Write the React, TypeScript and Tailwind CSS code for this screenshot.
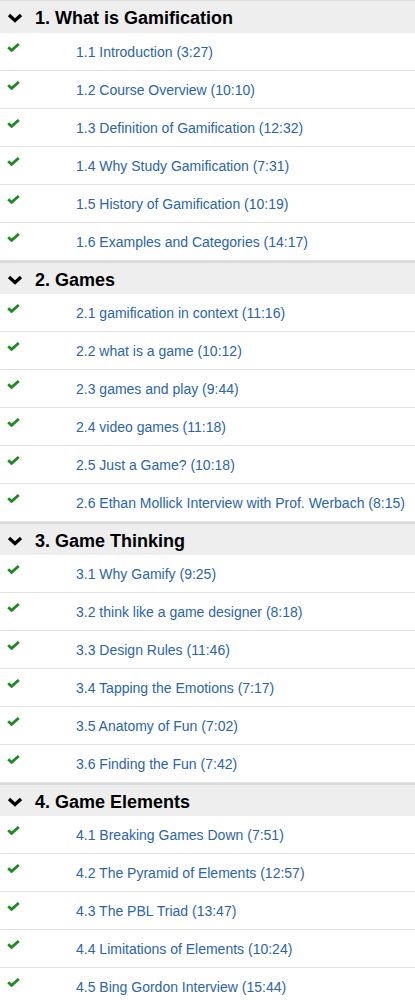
import { useState } from "react";

type Lecture = { title: string; time: string };
type Section = { title: string; lectures: Lecture[] };

const sections: Section[] = [
    {
        title: "1. What is Gamification",
        lectures: [
            { title: "1.1 Introduction", time: "3:27" },
            { title: "1.2 Course Overview", time: "10:10" },
            { title: "1.3 Definition of Gamification", time: "12:32" },
            { title: "1.4 Why Study Gamification", time: "7:31" },
            { title: "1.5 History of Gamification", time: "10:19" },
            { title: "1.6 Examples and Categories", time: "14:17" },
        ],
    },
    {
        title: "2. Games",
        lectures: [
            { title: "2.1 gamification in context", time: "11:16" },
            { title: "2.2 what is a game", time: "10:12" },
            { title: "2.3 games and play", time: "9:44" },
            { title: "2.4 video games", time: "11:18" },
            { title: "2.5 Just a Game?", time: "10:18" },
            { title: "2.6 Ethan Mollick Interview with Prof. Werbach", time: "8:15" },
        ],
    },
    {
        title: "3. Game Thinking",
        lectures: [
            { title: "3.1 Why Gamify", time: "9:25" },
            { title: "3.2 think like a game designer", time: "8:18" },
            { title: "3.3 Design Rules", time: "11:46" },
            { title: "3.4 Tapping the Emotions", time: "7:17" },
            { title: "3.5 Anatomy of Fun", time: "7:02" },
            { title: "3.6 Finding the Fun", time: "7:42" },
        ],
    },
    {
        title: "4. Game Elements",
        lectures: [
            { title: "4.1 Breaking Games Down", time: "7:51" },
            { title: "4.2 The Pyramid of Elements", time: "12:57" },
            { title: "4.3 The PBL Triad", time: "13:47" },
            { title: "4.4 Limitations of Elements", time: "10:24" },
            { title: "4.5 Bing Gordon Interview", time: "15:44" },
        ],
    },
];

const Chevron = () => (
    <svg width="16" height="10" viewBox="0 0 16 10" className="shrink-0">
        <path d="M2 2 L8 7.5 L14 2" fill="none" stroke="#000" strokeWidth="3.2" />
    </svg>
);

const Check = () => (
    <svg width="13" height="9" viewBox="0 0 13 9" className="shrink-0">
        <path d="M1.2 4.2 L4.6 7.4 L11.8 1" fill="none" stroke="#1d8c1d" strokeWidth="2.8" />
    </svg>
);

const SectionBlock = ({ section, first }: { section: Section; first: boolean }) => {
    const [open, setOpen] = useState(true);
    return (
        <div>
            <button
                type="button"
                onClick={() => setOpen(o => !o)}
                className={`flex h-[33px] w-full items-center gap-[12px] bg-[#eeeeee] pl-[7px] text-left ${first ? "border-t border-[#dddddd]" : "border-t-2 border-[#d9d9d9]"}`}
            >
                <span className="pt-[2px]"><Chevron /></span>
                <span className="pt-[2px] text-[18px] font-bold leading-none text-black">{section.title}</span>
            </button>
            {open && section.lectures.map(l => (
                <div key={l.title} className="flex h-[38px] border-b border-[#e2e2e2]">
                    <div className="w-[76px] pl-[7px] pt-[10px]">
                        <Check />
                    </div>
                    <a href="#" className="self-center pt-[2px] text-[14px] text-[#2a64ad]">
                        {l.title} ({l.time})
                    </a>
                </div>
            ))}
        </div>
    );
};

export default function App() {
    return (
        <div className="w-[415px] bg-white font-['Liberation_Sans',Arial,sans-serif]">
            {sections.map((s, i) => (
                <SectionBlock key={s.title} section={s} first={i === 0} />
            ))}
        </div>
    );
}
